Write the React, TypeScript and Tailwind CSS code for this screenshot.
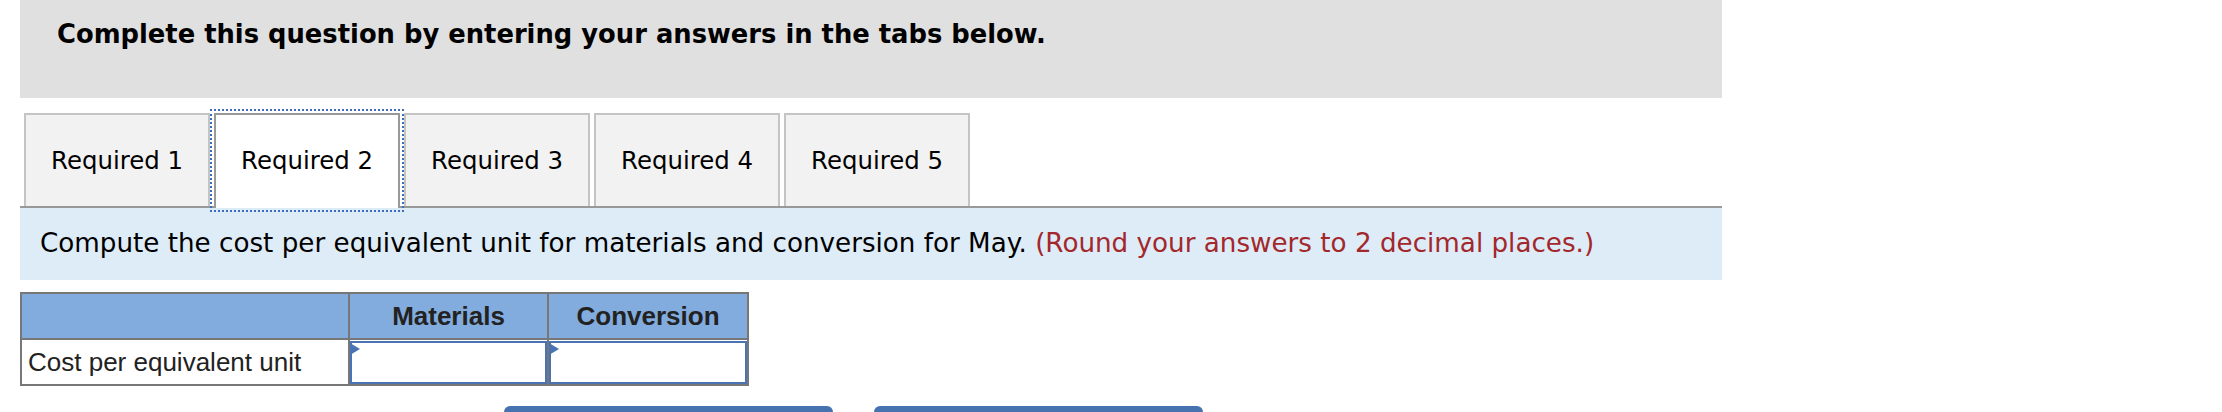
import React from 'react';

const tabs = ['Required 1', 'Required 2', 'Required 3', 'Required 4', 'Required 5'];

const InputCell = () => (
  <td className="border-2 border-[#777] p-0 h-[44px]">
    <div className="relative h-[43px] border-2 border-[#4a73b4] bg-white">
      {/* little arrow marker in the corner */}
      <span className="absolute left-[-2px] top-0 w-0 h-0 border-y-[6px] border-y-transparent border-l-[10px] border-l-[#4a73b4]" />
    </div>
  </td>
);

const App = () => {
  const active = 1;

  return (
    <div className="w-[2222px] h-[412px] overflow-hidden bg-white font-['DejaVu_Sans',Verdana,sans-serif]">
      <div className="pl-[20px] w-[1722px]">
        {/* HEADER */}
        <div className="h-[98px] bg-[#e0e0e0] pl-[37px] pt-[19px]">
          <h1 className="text-[25.8px] leading-[30px] font-bold text-black">
            Complete this question by entering your answers in the tabs below.
          </h1>
        </div>

        {/* TABS */}
        <div className="mt-[15px] flex items-end pl-[4px] gap-[4px] border-b-2 border-[#999] h-[95px]">
          {tabs.map((t, i) =>
            i === active ? (
              <div
                key={t}
                className="w-[186px] h-[95px] mb-[-2px] flex items-center justify-center bg-white border-2 border-b-0 border-[#999] outline-2 outline-dotted outline-[#3a6cc0] outline-offset-[2px] text-[24.4px] text-black"
              >
                {t}
              </div>
            ) : (
              <div
                key={t}
                className="w-[186px] h-[93px] pt-[2px] flex items-center justify-center bg-[#f2f2f2] border-2 border-b-0 border-[#c4c4c4] text-[24.4px] text-black"
              >
                {t}
              </div>
            )
          )}
        </div>

        {/* INSTRUCTIONS */}
        <div className="h-[72px] bg-[#deecf8] pl-[20px] flex items-center text-[26.2px] text-black">
          <p>
            Compute the cost per equivalent unit for materials and conversion for May.{' '}
            <span className="text-[#a3282b]">(Round your answers to 2 decimal places.)</span>
          </p>
        </div>

        {/* TABLE */}
        <table className="mt-[12px] border-collapse border-2 border-[#777] font-['Liberation_Sans',Arial,sans-serif] text-[26px]">
          <thead>
            <tr className="bg-[#82abde] h-[46px]">
              <th className="w-[328px] border-2 border-[#777]" />
              <th className="w-[199px] border-2 border-[#777] font-bold text-[#222] text-center">Materials</th>
              <th className="w-[200px] border-2 border-[#777] font-bold text-[#222] text-center">Conversion</th>
            </tr>
          </thead>
          <tbody>
            <tr className="h-[46px]">
              <td className="border-2 border-[#777] pl-[6px] text-[#222] text-left">Cost per equivalent unit</td>
              <InputCell />
              <InputCell />
            </tr>
          </tbody>
        </table>

        {/* NAV BUTTONS */}
        <div className="mt-[20px] flex gap-[41px] pl-[484px]">
          <button className="w-[329px] h-[40px] bg-[#4673b0] rounded-t-[6px]" />
          <button className="w-[329px] h-[40px] bg-[#4673b0] rounded-t-[6px]" />
        </div>
      </div>
    </div>
  );
};

export default App;
